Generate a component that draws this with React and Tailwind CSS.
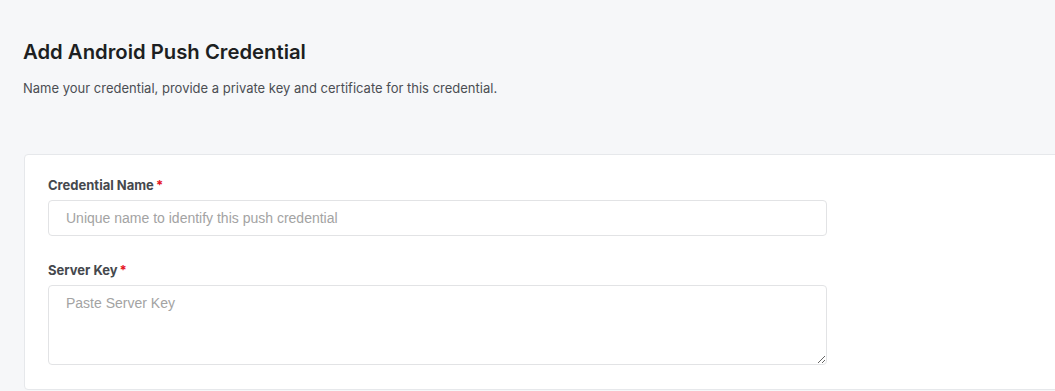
import React from "react";

export default function App() {
  return (
    <div className="w-[1055px] h-[391px] overflow-hidden bg-[#f6f7f9] pl-[23px] pt-[38px]" style={{ fontFamily: "Inter, 'Noto Sans', sans-serif" }}>
      <h1 className="text-[20.3px] leading-[28px] font-semibold text-[#1d1f22]">Add Android Push Credential</h1>
      <p className="mt-[13px] text-[13px] leading-[18px] text-[#4b4e53]">Name your credential, provide a private key and certificate for this credential.</p>
      <div className="mt-[57px] ml-[1px] bg-white border border-[#e6e8eb] rounded-[4px] pl-[23px] pt-[21px] pb-[24px] w-[1100px]">
        <label className="block text-[13px] leading-[18px] font-bold text-[#45484d]">
          Credential Name<span className="text-[#e5141e] ml-[2px]">*</span>
        </label>
        <input
          className="mt-[6px] block w-[779px] h-[36px] border border-[#e2e3e5] rounded-[4px] px-[17px] text-[14px] placeholder:text-[#a3a3a3] outline-none"
          style={{ fontFamily: "'Liberation Sans', Arial, sans-serif" }}
          placeholder="Unique name to identify this push credential"
        />
        <label className="block mt-[25px] text-[13px] leading-[18px] font-bold text-[#45484d]">
          Server Key<span className="text-[#e5141e] ml-[2px]">*</span>
        </label>
        <textarea
          className="mt-[6px] block w-[779px] h-[80px] border border-[#e2e3e5] rounded-[4px] px-[17px] py-[7px] text-[14px] placeholder:text-[#a3a3a3] outline-none resize-y"
          style={{ fontFamily: "'Liberation Sans', Arial, sans-serif" }}
          placeholder="Paste Server Key"
        />
      </div>
    </div>
  );
}
